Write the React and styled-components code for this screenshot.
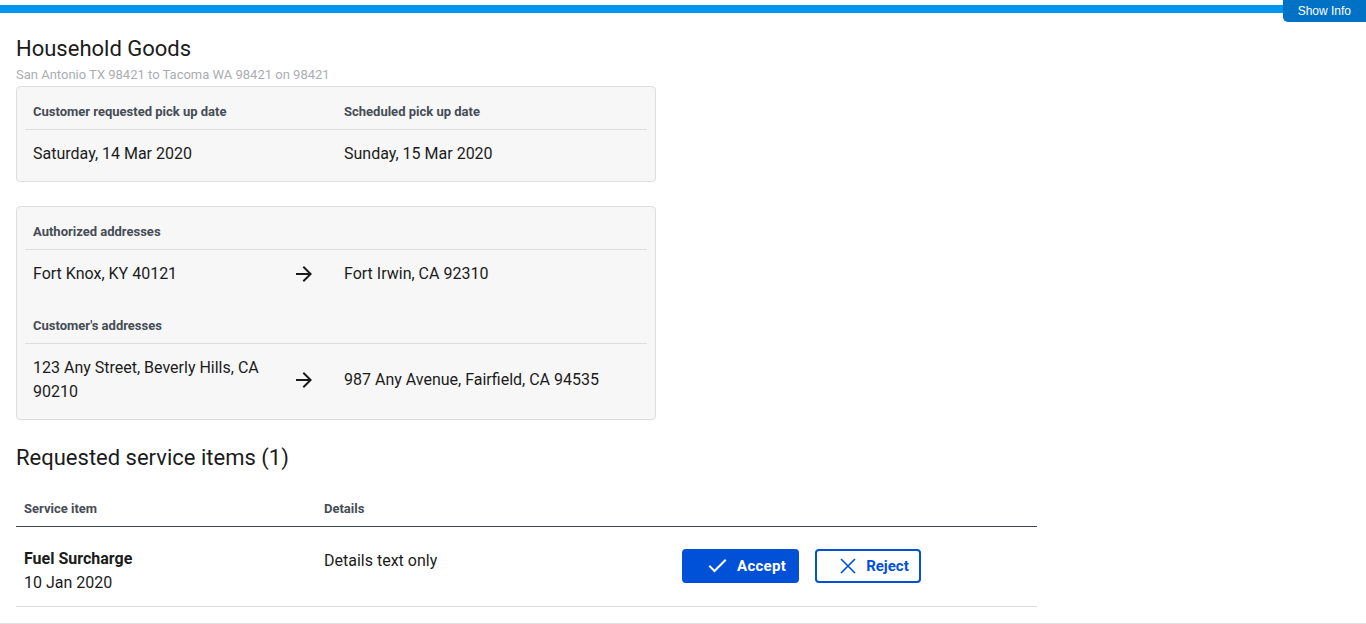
import React from "react";
import styled, { createGlobalStyle } from "styled-components";

const GlobalStyle = createGlobalStyle`
    body {
        margin: 0;
        font-family: Roboto, "Liberation Sans", sans-serif;
        color: #1b1b1b;
        background: #fff;
    }
    * { box-sizing: border-box; }
`;

const ArrowIcon = () => (
    <svg width="24" height="24" viewBox="0 0 24 24" fill="#1b1b1b">
        <path d="M12 4l-1.41 1.41L16.17 11H4v2h12.17l-5.58 5.59L12 20l8-8z" />
    </svg>
);

const CheckIcon = () => (
    <svg width="24" height="24" viewBox="0 0 24 24" fill="none" stroke="currentColor" strokeWidth="2" strokeLinecap="square">
        <path d="M5 12.5l4.5 4.5L20 6.5" />
    </svg>
);

const CloseIcon = () => (
    <svg width="24" height="24" viewBox="0 0 24 24" fill="none" stroke="currentColor" strokeWidth="1.6">
        <path d="M5 5l14 14M19 5L5 19" />
    </svg>
);

const App = () => {
    return (
    <Page>
        <GlobalStyle />
        <TopStrip>
            <Bar />
        </TopStrip>
        <ShowInfo>Show Info</ShowInfo>
        <Main>
            <Title>Household Goods</Title>
            <Subtitle>San Antonio TX 98421 to Tacoma WA 98421 on 98421</Subtitle>

            <Card>
                <DataTable>
                    <colgroup>
                        <col style={{ width: "50%" }} />
                        <col style={{ width: "50%" }} />
                    </colgroup>
                    <thead>
                        <tr>
                            <HeadCell>Customer requested pick up date</HeadCell>
                            <HeadCell>Scheduled pick up date</HeadCell>
                        </tr>
                    </thead>
                    <tbody>
                        <tr>
                            <BodyCell>Saturday, 14 Mar 2020</BodyCell>
                            <BodyCell>Sunday, 15 Mar 2020</BodyCell>
                        </tr>
                    </tbody>
                </DataTable>
            </Card>

            <Card $spaced>
                <AddressTable
                    title="Authorized addresses"
                    from="Fort Knox, KY 40121"
                    to="Fort Irwin, CA 92310"
                />
                <AddressTable
                    follow
                    title="Customer's addresses"
                    from="123 Any Street, Beverly Hills, CA 90210"
                    to="987 Any Avenue, Fairfield, CA 94535"
                />
            </Card>

            <SectionTitle>Requested service items (1)</SectionTitle>
            <ServiceTable>
                <colgroup>
                    <col style={{ width: "300px" }} />
                    <col style={{ width: "358px" }} />
                    <col />
                </colgroup>
                <thead>
                    <tr>
                        <ServiceHead>Service item</ServiceHead>
                        <ServiceHead>Details</ServiceHead>
                        <ServiceHead />
                    </tr>
                </thead>
                <tbody>
                    <tr>
                        <ServiceCell>
                            <ItemName>Fuel Surcharge</ItemName>
                            <div>10 Jan 2020</div>
                        </ServiceCell>
                        <ServiceCell $offset={2}>Details text only</ServiceCell>
                        <ServiceCell $offset={3}>
                            <Actions>
                                <ActionButton $primary>
                                    <CheckIcon />
                                    Accept
                                </ActionButton>
                                <ActionButton>
                                    <CloseIcon />
                                    Reject
                                </ActionButton>
                            </Actions>
                        </ServiceCell>
                    </tr>
                </tbody>
            </ServiceTable>
        </Main>
        <Footer />
    </Page>
    )
};

const AddressTable = ({ title, from, to, follow = false }) => (
    <DataTable $follow={follow}>
        <colgroup>
            <col style={{ width: "263px" }} />
            <col style={{ width: "48px" }} />
            <col />
        </colgroup>
        <thead>
            <tr>
                <HeadCell colSpan={3}>{title}</HeadCell>
            </tr>
        </thead>
        <tbody>
            <tr>
                <BodyCell>{from}</BodyCell>
                <ArrowCell><ArrowIcon /></ArrowCell>
                <BodyCell>{to}</BodyCell>
            </tr>
        </tbody>
    </DataTable>
);

const Page = styled.div`
    position: relative;
    min-height: 624px;
`;
const TopStrip = styled.div`
    padding-top: 5px;
`;
const Bar = styled.div`
    height: 8px;
    background-color: #0096ef;
`;
const ShowInfo = styled.button`
    position: absolute;
    top: 0;
    right: 0;
    height: 22px;
    padding: 0 15px;
    border: none;
    border-radius: 0 0 0 5px;
    background-color: #0072c6;
    color: #fff;
    font-family: "Liberation Sans", Arial, sans-serif;
    font-size: 12px;
    line-height: 22px;
`;
const Main = styled.main`
    padding: 0 16px;
`;
const Title = styled.h2`
    margin: 23px 0 0;
    font-size: 22px;
    font-weight: 400;
    line-height: 26px;
    color: #1b1b1b;
`;
const Subtitle = styled.p`
    margin: 4px 0 0;
    font-size: 13px;
    line-height: 18px;
    color: #a9aeb1;
`;
const Card = styled.div`
    width: 640px;
    margin-top: ${(props) => (props.$spaced ? "24px" : "2px")};
    padding: 8px;
    background-color: #f7f7f7;
    border: 1px solid #dcdee0;
    border-radius: 4px;
`;
const DataTable = styled.table`
    width: 100%;
    border-collapse: collapse;
    table-layout: fixed;
    margin-top: ${(props) => (props.$follow ? "16px" : "0")};
`;
const HeadCell = styled.th`
    padding: 8px 8px 8px;
    text-align: left;
    font-size: 13px;
    font-weight: 700;
    line-height: 18px;
    color: #454c55;
    border-bottom: 1px solid #dcdee0;
`;
const BodyCell = styled.td`
    padding: 12px 8px 7px;
    font-size: 16px;
    line-height: 24px;
    vertical-align: middle;
`;
const ArrowCell = styled.td`
    padding: 12px 4px 7px;
    vertical-align: middle;
    svg {
        display: block;
    }
`;
const SectionTitle = styled.h3`
    margin: 25px 0 0;
    font-size: 22px;
    font-weight: 400;
    line-height: 26px;
`;
const ServiceTable = styled.table`
    width: 1021px;
    margin-top: 19px;
    border-collapse: collapse;
    table-layout: fixed;
`;
const ServiceHead = styled.th`
    padding: 10px 8px 8px;
    text-align: left;
    font-size: 13px;
    font-weight: 700;
    line-height: 18px;
    color: #454c55;
    border-bottom: 1px solid #3d4551;
`;
const ServiceCell = styled.td`
    padding: ${(props) => (props.$offset === 3 ? "22px 8px 0" : props.$offset === 2 ? "22px 8px 11px" : "20px 8px 11px")};
    font-size: 16px;
    line-height: 24px;
    vertical-align: top;
    border-bottom: 1px solid #dcdee0;
`;
const ItemName = styled.div`
    font-weight: 700;
`;
const Actions = styled.div`
    display: flex;
    gap: 16px;
`;
const ActionButton = styled.button`
    display: flex;
    align-items: center;
    gap: ${(props) => (props.$primary ? "8px" : "6px")};
    height: 34px;
    padding: ${(props) => (props.$primary ? "0 11px 0 21px" : "0 10px 0 19px")};
    border: 2px solid #0050d8;
    border-radius: 4px;
    background-color: ${(props) => (props.$primary ? "#0050d8" : "#fff")};
    color: ${(props) => (props.$primary ? "#fff" : "#0050d8")};
    font-family: Roboto, "Liberation Sans", sans-serif;
    font-size: 15px;
    font-weight: 700;
    letter-spacing: ${(props) => (props.$primary ? "0.3px" : "0")};
`;
const Footer = styled.div`
    margin-top: 16px;
    border-top: 1px solid #dfe1e2;
    height: 1px;
`;

export default App;
